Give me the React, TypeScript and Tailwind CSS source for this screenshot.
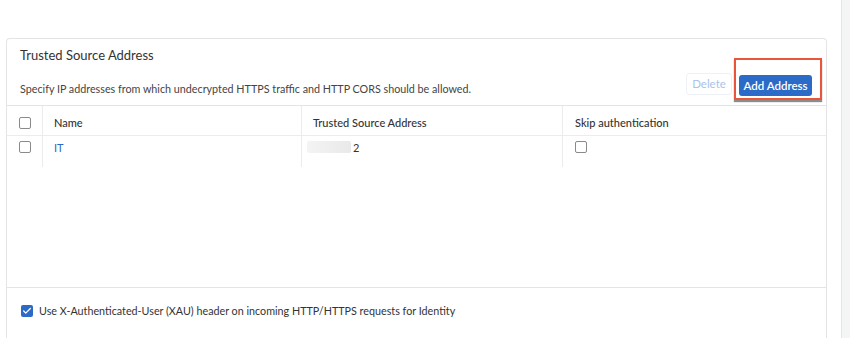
import { Check } from "lucide-react"

function Box({ checked = false }: { checked?: boolean }) {
    if (checked) {
        return (
            <span className="grid h-[12px] w-[12px] shrink-0 place-content-center rounded-[2px] bg-[#2c6ac7]">
                <Check className="h-[10px] w-[10px] text-white" strokeWidth={3} />
            </span>
        )
    }
    return (
        <span className="block h-[12px] w-[12px] rounded-[2px] border border-[#8a8a8a] bg-white" />
    )
}

export default function App() {
    return (
        <div
            className="flex h-[338px] w-[850px] overflow-hidden bg-white text-[#333]"
            style={{ fontFamily: "Lato, 'Open Sans', sans-serif" }}
        >
            <div className="flex-1 pl-[6px] pr-[14px] pt-[38px]">
                <div className="h-[320px] rounded-t-[4px] border border-b-0 border-[#e4e4e4]">
                    <div className="px-[13px] pt-[8px]">
                        <h2 className="text-[13px] leading-[16px]">Trusted Source Address</h2>
                        <div className="mt-[10px] flex items-end justify-between pb-[8px]">
                            <p className="pb-[1px] text-[10.75px] leading-[14px] text-[#444]">
                                Specify IP addresses from which undecrypted HTTPS traffic and HTTP CORS should be
                                allowed.
                            </p>
                            <div className="relative -top-[1px] mr-[1px] flex items-center gap-[7px]">
                                <button className="h-[22px] w-[46px] rounded-[3px] border border-[#eef1f6] text-[11.5px] text-[#a9c3ea]">
                                    Delete
                                </button>
                                <div className="relative">
                                    <span className="absolute bottom-[-4px] left-[-5px] right-[-10px] top-[-14px] border-2 border-[#e8553b] shadow-[0_2px_1px_rgba(0,0,0,0.45)]" />
                                    <button className="relative h-[21px] w-[73px] rounded-[3px] bg-[#2c6ac7] text-[11.5px] font-semibold text-white">
                                        Add Address
                                    </button>
                                </div>
                            </div>
                        </div>
                    </div>

                    <div className="h-[183px] border-y border-[#e4e4e4]">
                        <div className="grid h-[30px] grid-cols-[36px_259px_261px_1fr] border-b border-[#ececec] text-[11px] font-medium">
                            <div className="flex items-center justify-center border-r border-[#ececec] pt-[5px]">
                                <Box />
                            </div>
                            <div className="flex items-center border-r border-[#ececec] pl-[11px] pt-[5px]">
                                Name
                            </div>
                            <div className="flex items-center border-r border-[#ececec] pl-[11px] pt-[5px]">
                                Trusted Source Address
                            </div>
                            <div className="flex items-center pl-[12px] pt-[5px]">Skip authentication</div>
                        </div>
                        <div className="grid grid-cols-[36px_259px_261px_1fr] text-[11px]">
                            <div className="flex h-[31px] items-start justify-center border-r border-[#ececec] pt-[5px]">
                                <Box />
                            </div>
                            <div className="border-r border-[#ececec] pl-[11px] pt-[4px] text-[#2c6ac7]">IT</div>
                            <div className="flex items-start gap-[2px] border-r border-[#ececec] pl-[5px] pt-[4px]">
                                <span className="mt-[1px] block h-[12px] w-[44px] rounded-[2px] bg-gradient-to-r from-[#f4f4f4] to-[#e9e9e9] blur-[0.5px]" />
                                <span>2</span>
                            </div>
                            <div className="pl-[12px] pt-[5px]">
                                <Box />
                            </div>
                        </div>
                    </div>

                    <label className="flex items-center gap-[6px] pl-[14px] pt-[15px] text-[10.75px] text-[#333]">
                        <Box checked />
                        Use X-Authenticated-User (XAU) header on incoming HTTP/HTTPS requests for Identity
                    </label>
                </div>
            </div>
            <div className="w-[9px] border-l border-[#e6e6e6] bg-[#f4f5f5]" />
        </div>
    )
}
